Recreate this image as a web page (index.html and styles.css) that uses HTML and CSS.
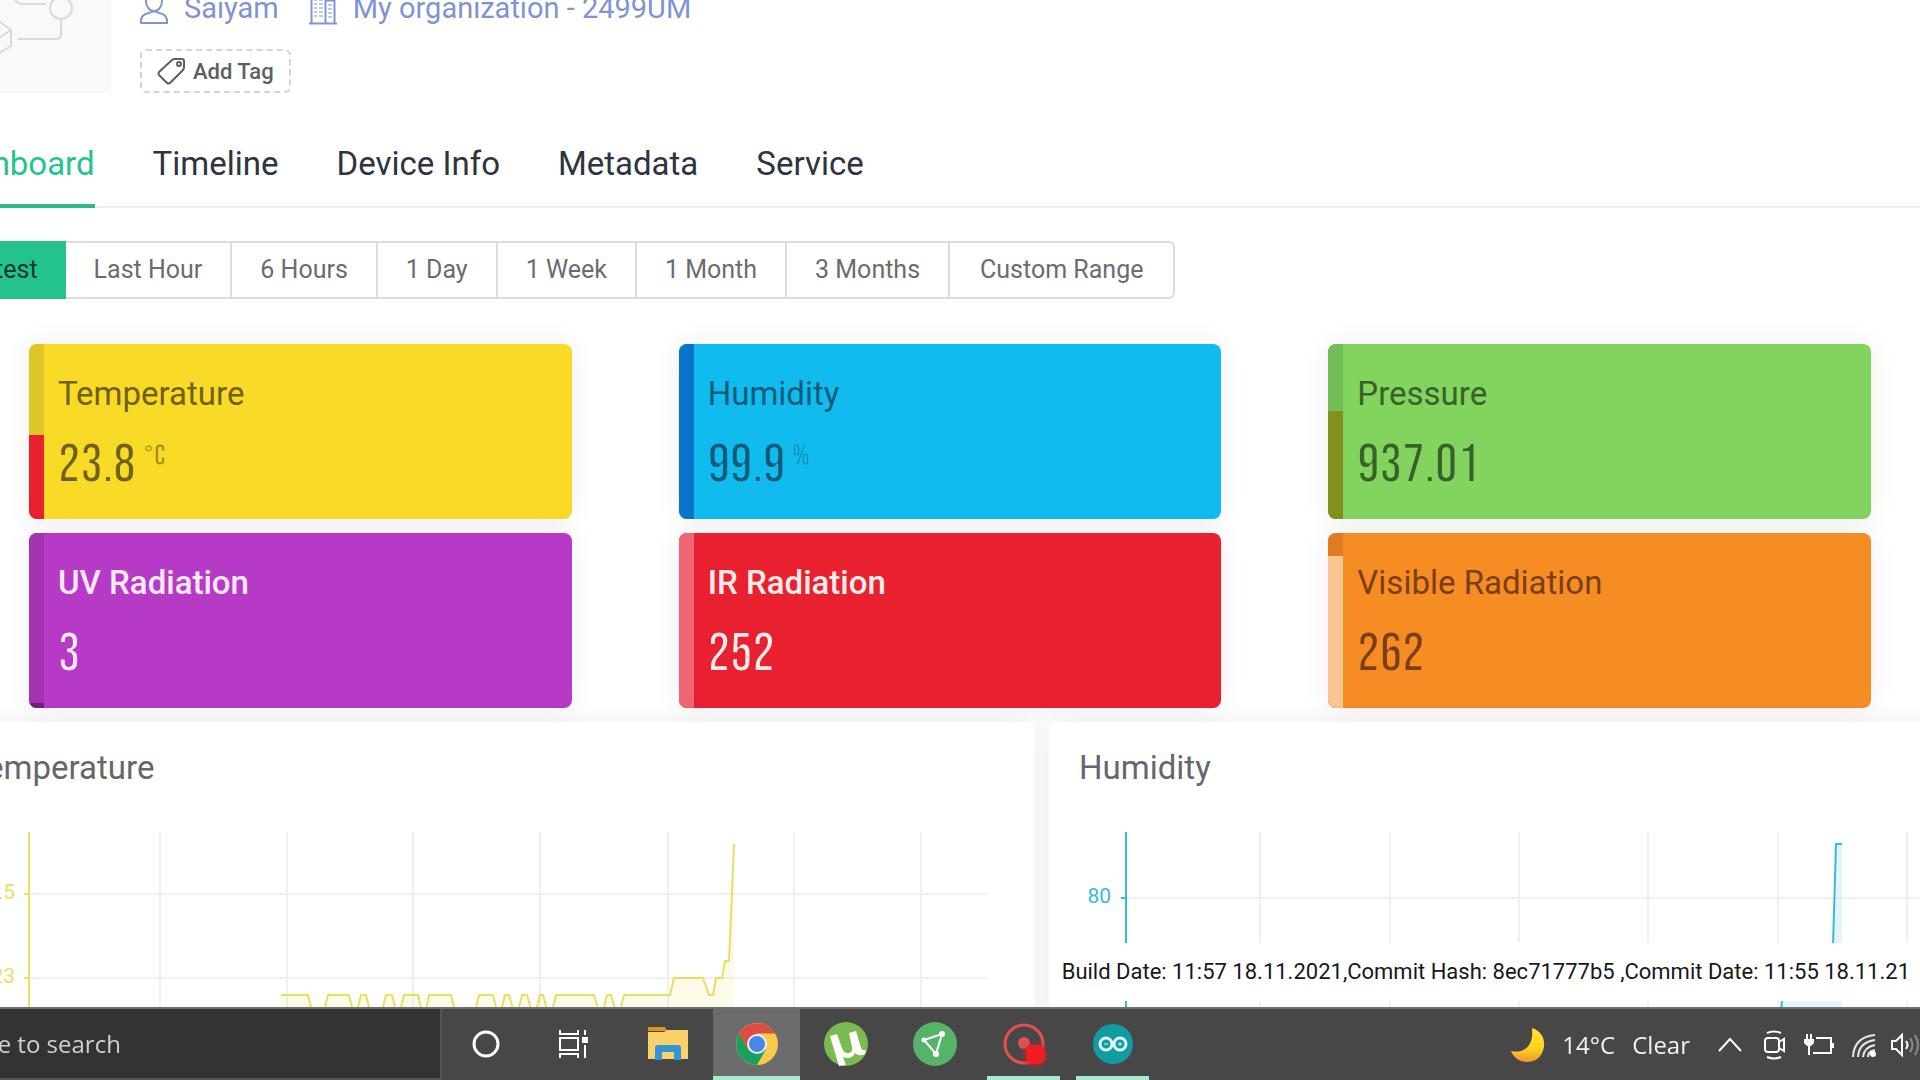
FILE: index.html
```html
<!DOCTYPE html>
<html lang="en">
<head>
<meta charset="utf-8">
<title>Device dashboard</title>
<link rel="stylesheet" href="styles.css">
</head>
<body>
<main class="page">
  <header class="device">
    <div class="device-thumb">
      <svg width="173" height="173" viewBox="0 0 173 173" fill="none" stroke="#dadada" stroke-width="2" aria-hidden="true">
        <circle cx="123" cy="88" r="11"/>
        <path d="M76 78q3 6 8 6h24M123 99v15q0 5-5 5H80M40 112l18-13 15 11v16l-15 9-18-12zM58 135v-15l15-10M58 120l-18-8"/>
      </svg>
    </div>
    <div class="device-info">
      <div class="device-meta">
        <a class="meta-link" href="#owner">
          <svg width="28" height="34" viewBox="0 0 28 34" fill="none" stroke="currentColor" stroke-width="2" aria-hidden="true"><ellipse cx="14" cy="10" rx="8" ry="10"/><path d="M1 32v-3q1-6 8-7 5-3 10 0 7 1 8 7v3z"/></svg>
          Saiyam
        </a>
        <a class="meta-link" href="#organization">
          <svg width="28" height="34" viewBox="0 0 28 34" fill="none" stroke="currentColor" stroke-width="1" aria-hidden="true"><path d="M0 32.500h28M2.500 32V4.500h14V32M16.500 9.500h9V32" stroke-width="2"/><path d="M5 9h3M10 9h4M5 13h3M10 13h4M5 17h3M10 17h4M5 21h3M10 21h4M5 25h3M10 25h4M19 14h4M19 18h4M19 22h4M19 26h4" stroke-width="1"/></svg>
          My organization - 2499UM
        </a>
      </div>
      <button class="add-tag" type="button">
        <svg width="28" height="28" viewBox="0 0 28 28" fill="none" stroke="currentColor" stroke-width="2" stroke-linejoin="round" aria-hidden="true"><path d="M15 3q1-1 3-1h7q2 0 2 2v6q0 2-1 3L13 26q-1 1-3 0l-8-8q-1-1 0-3z"/><circle cx="22" cy="7" r="2"/></svg>
        Add Tag
      </button>
    </div>
  </header>

  <nav class="tabs">
    <a class="tab tab-active" href="#dashboard">Dashboard</a>
    <a class="tab" href="#timeline">Timeline</a>
    <a class="tab" href="#info">Device Info</a>
    <a class="tab" href="#metadata">Metadata</a>
    <a class="tab" href="#service">Service</a>
  </nav>

  <div class="ranges">
    <button class="range range-active" type="button">Latest</button>
    <button class="range" type="button">Last Hour</button>
    <button class="range" type="button">6 Hours</button>
    <button class="range" type="button">1 Day</button>
    <button class="range" type="button">1 Week</button>
    <button class="range" type="button">1 Month</button>
    <button class="range" type="button">3 Months</button>
    <button class="range" type="button">Custom Range</button>
  </div>

  <section class="widgets">
    <article class="widget temperature">
      <div class="level"><div class="level-fill" style="height:48%"></div></div>
      <div class="widget-body"><h2 class="widget-title">Temperature</h2><p class="value">23.8<span class="unit">°C</span></p></div>
    </article>
    <article class="widget humidity">
      <div class="level"><div class="level-fill" style="height:100%"></div></div>
      <div class="widget-body"><h2 class="widget-title">Humidity</h2><p class="value">99.9<span class="unit">%</span></p></div>
    </article>
    <article class="widget pressure">
      <div class="level"><div class="level-fill" style="height:62%"></div></div>
      <div class="widget-body"><h2 class="widget-title">Pressure</h2><p class="value">937.01</p></div>
    </article>
    <article class="widget uv">
      <div class="level"><div class="level-fill" style="height:3%"></div></div>
      <div class="widget-body"><h2 class="widget-title">UV Radiation</h2><p class="value">3</p></div>
    </article>
    <article class="widget ir">
      <div class="level"><div class="level-fill" style="height:100%"></div></div>
      <div class="widget-body"><h2 class="widget-title">IR Radiation</h2><p class="value">252</p></div>
    </article>
    <article class="widget visible">
      <div class="level"><div class="level-fill" style="height:87%"></div></div>
      <div class="widget-body"><h2 class="widget-title">Visible Radiation</h2><p class="value">262</p></div>
    </article>
  </section>

  <section class="charts">
    <article class="chart">
      <h2 class="chart-title">Temperature</h2>
      <svg class="plot plot-temperature" width="1097" height="220" viewBox="0 0 1097 220">
        <path class="grid" d="M222 20V220M349 20V220M475 20V220M602 20V220M730 20V220M856 20V220M983 20V220M91 82H1049M91 166H1049"/>
        <path class="area" d="M343 220V183H370L376 207H384L390 183H411L417 207L423 183H428L434 207H442L448 183H454L460 207L466 183H480L486 207L491 183H513L519 207H535L541 183H555L561 207L567 183H571L578 207L584 183H589L596 207L602 183H605L612 207L618 183H656L663 207L669 183H673L680 207L686 183H732L736 166H765L771 183H775L778 166H784L787 149H791L796 32V220Z"/>
        <path class="line" d="M343 183H370L376 207H384L390 183H411L417 207L423 183H428L434 207H442L448 183H454L460 207L466 183H480L486 207L491 183H513L519 207H535L541 183H555L561 207L567 183H571L578 207L584 183H589L596 207L602 183H605L612 207L618 183H656L663 207L669 183H673L680 207L686 183H732L736 166H765L771 183H775L778 166H784L787 149H791L796 32"/>
        <path class="axis" d="M91 20V220M86 82H91M86 166H91"/>
        <text class="tick" x="77" y="87">23.5</text>
        <text class="tick" x="77" y="171">23</text>
      </svg>
    </article>
    <article class="chart">
      <h2 class="chart-title">Humidity</h2>
      <svg class="plot plot-humidity" width="1097" height="220" viewBox="0 0 1097 220">
        <path class="grid" d="M211 20V220M341 20V220M470 20V220M599 20V220M729 20V220M858 20V220M77 86H1049"/>
        <path class="area" d="M731 220V208L735 168H783L787 32H793V220Z"/>
        <path class="line" d="M731 208L735 168H783L787 32H793"/>
        <path class="axis" d="M77 20V220M72 86H77"/>
        <text class="tick" x="62" y="91">80</text>
      </svg>
    </article>
  </section>
</main>

<p class="build">Build Date: 11:57 18.11.2021,Commit Hash: 8ec71777b5 ,Commit Date: 11:55 18.11.21</p>

<footer class="taskbar">
  <label class="search"><input class="search-input" type="text" value="Type here to search" aria-label="Search"></label>
  <div class="shell">
    <button class="shell-button" type="button" aria-label="Cortana">
      <svg width="30" height="30" viewBox="0 0 30 30" fill="none" stroke="#fff" stroke-width="3"><circle cx="15" cy="15" r="12"/></svg>
    </button>
    <button class="shell-button" type="button" aria-label="Task view">
      <svg width="30" height="30" viewBox="0 0 30 30" fill="none" stroke="#fff" stroke-width="2"><path d="M1 1v4h18V1M1 29v-4h18v4M1 9h18v12H1zM26 1v5M26 16v13"/><path d="M23 8h6v6h-6z" fill="#fff" stroke="none"/></svg>
    </button>
  </div>
  <div class="apps">
    <button class="app" type="button" aria-label="File Explorer">
      <svg width="40" height="36" viewBox="0 0 40 36"><path d="M0 1h17l2 4H0z" fill="#dc9419"/><path d="M0 6h16l3-2h21v29H0z" fill="#fbd16b"/><path d="M7 34V22q0-3 3-3h20q3 0 3 3v12h-7v-8H14v8z" fill="#3594d4"/></svg>
    </button>
    <button class="app app-current" type="button" aria-label="Chrome">
      <svg width="42" height="42" viewBox="0 0 42 42"><circle cx="21" cy="21" r="21" fill="#fcca4b"/><path d="M3 10.500A21 21 0 0 1 39.200 10.500H21L12 26z" fill="#dc4c41"/><path d="M3 10.500A21 21 0 0 0 21 42L30 26.200 12 26.200z" fill="#18a05e"/><path d="M3 10.500L12 26.200 21 21V10.500z" fill="#dc4c41"/><circle cx="21" cy="21" r="10" fill="#e8eefb"/><circle cx="21" cy="21" r="8" fill="#4a86ea"/></svg>
    </button>
    <button class="app" type="button" aria-label="uTorrent">
      <svg width="44" height="44" viewBox="0 0 44 44"><circle cx="22" cy="22" r="22" fill="#7aba51"/><path d="M6 14l7-2 5 14q2 6 7 5 4-1 3-6L25 11l7-2 5 17q1 3 5 2l-1 4q-6 3-10-1-2 5-8 5-2 0-4-1l3 8-7 1z" fill="#fff"/></svg>
    </button>
    <button class="app" type="button" aria-label="VPN">
      <svg width="44" height="44" viewBox="0 0 44 44"><circle cx="22" cy="22" r="22" fill="#56b369"/><path d="M11 18L29 12 23 32z" fill="none" stroke="#fff" stroke-width="2"/><g fill="#fff"><circle cx="11" cy="18" r="2.500"/><circle cx="29" cy="12" r="3"/><circle cx="23" cy="32" r="3"/></g></svg>
    </button>
    <button class="app app-open" type="button" aria-label="Recorder">
      <svg width="48" height="48" viewBox="0 0 48 48" fill="none"><circle cx="24" cy="24" r="19" stroke="#e0524f" stroke-width="3"/><circle cx="24" cy="23" r="6" fill="#e0524f"/><circle cx="35" cy="35" r="13" fill="#d81f26" opacity=".35"/><rect x="26" y="25" width="19" height="19" rx="6" fill="#f11d25"/></svg>
    </button>
    <button class="app app-open" type="button" aria-label="Arduino">
      <svg width="40" height="40" viewBox="0 0 40 40" fill="none"><circle cx="20" cy="20" r="20" fill="#109da2"/><g stroke="#dff5f5" stroke-width="3"><circle cx="13" cy="20" r="6"/><circle cx="27" cy="20" r="6"/></g><path d="M11 20h4M25 20h4M27 18v4" stroke="#dff5f5"/></svg>
    </button>
  </div>
  <div class="tray">
    <div class="weather">
      <svg width="34" height="34" viewBox="0 0 34 34" aria-hidden="true"><defs><linearGradient id="moon" x1="0" y1="0" x2="0" y2="1"><stop offset="0" stop-color="#ffe53a"/><stop offset=".6" stop-color="#fcd31c"/><stop offset="1" stop-color="#f2952c"/></linearGradient></defs><path d="M21 0C30 3 34 10 33 19 31 29 25 34 16 34 9 34 3 30 0 23 14 26 23 17 21 0z" fill="url(#moon)"/></svg>
      <span>14°C</span><span>Clear</span>
    </div>
    <svg class="tray-more" width="24" height="16" viewBox="0 0 24 16" fill="none" stroke="#fff" stroke-width="2"><path d="M1 14L12 2l11 12"/></svg>
    <svg width="22" height="30" viewBox="0 0 22 30" fill="none" stroke="#fff" stroke-width="2"><path d="M3 3q7-3 14 0M3 27q7 3 14 0M15 12l5-3v12l-5-3"/><rect x="1" y="8" width="14" height="14" rx="3"/></svg>
    <svg width="30" height="22" viewBox="0 0 30 22" fill="none" stroke="#fff" stroke-width="2"><path d="M12 4h15v15H9M29 9v5M3 0v5M7 0v5M5 12v9"/><path d="M0 5h10v4L7 12H3L0 9z" fill="#fff" stroke="none"/></svg>
    <svg width="24" height="24" viewBox="0 0 24 24" fill="none" stroke="#e8e8e8" stroke-width="2"><path d="M1 24Q2 4 23 2M6 24Q7 9 23 7M11 24Q12 14 23 12M16 24Q16 18 23 17"/><circle cx="21" cy="21" r="3" fill="#fff" stroke="none"/></svg>
    <svg class="tray-volume" width="29" height="26" viewBox="0 0 29 26" fill="none" stroke="#fff" stroke-width="2"><path d="M1 9h4l6-6v20l-6-6H1z"/><path d="M15 9q3 4 0 8"/><path d="M19 6q5 7 0 14M24 3q6 10 0 20" stroke="#8b8b8b"/></svg>
  </div>
</footer>
</body>
</html>
```
FILE: styles.css
```css
* {
  box-sizing: border-box;
}

html,
body {
  margin: 0;
  height: 100%;
  overflow: hidden;
}

body {
  background: #fff;
  color: #2e3440;
  font-family: Roboto, "Liberation Sans", sans-serif;
  font-size: 33px;
}

button,
input {
  font: inherit;
  color: inherit;
}

h2,
p {
  margin: 0;
  font-weight: 400;
}

a {
  color: inherit;
  text-decoration: none;
}

svg {
  display: block;
  flex: none;
}

/* The page is wider than the window and scrolled right and down. */
.page {
  width: calc(100% + 288px);
  margin: -80px 0 0 -62px;
}

.device {
  display: flex;
  gap: 29px;
}

.device-thumb {
  background: #f9f9f9;
}

.device-info {
  display: flex;
  flex-direction: column;
  justify-content: flex-end;
  align-items: flex-start;
  gap: 24px;
}

.device-meta {
  display: flex;
  gap: 30px;
  color: #8093d2;
  font-size: 29px;
  line-height: 34px;
}

.meta-link {
  display: flex;
  gap: 16px;
}

.add-tag {
  display: flex;
  align-items: center;
  gap: 8px;
  height: 44px;
  padding: 0 15px;
  border: 2px dashed #d4d4d4;
  border-radius: 6px;
  background: none;
  color: #5c5e66;
  font-size: 22px;
  font-weight: 500;
}

.tabs {
  display: flex;
  gap: 58px;
  margin-top: 43px;
  margin-left: -3px;
  border-bottom: 2px solid #eeeeef;
}

.tab {
  margin-bottom: -2px;
  padding: 8px 0 20px;
  border-bottom: 4px solid transparent;
  line-height: 40px;
}

.tab-active {
  border-color: #2cbb88;
  color: #24c48e;
}

.ranges {
  display: inline-flex;
  margin-top: 33px;
  border: 2px solid #dcdcde;
  border-radius: 6px;
}

.range {
  height: 54px;
  padding: 0 28px 2px;
  border: 0;
  border-right: 2px solid #dcdcde;
  background: none;
  color: #6b6c70;
  font-size: 25px;
}

.range:last-child {
  padding: 0 30px 2px;
  border-right: 0;
}

.range-active {
  margin: -2px 0;
  height: 58px;
  border: 0;
  background: #24c38e;
  color: #14392d;
}

.widgets {
  display: grid;
  grid-template-columns: repeat(3, 1fr);
  gap: 14px 107px;
  margin-top: 45px;
  padding: 0 275px 0 91px;
}

.widget {
  display: flex;
  height: 175px;
  border-radius: 8px;
  background: var(--card);
  box-shadow: 0 0 28px rgba(0, 0, 0, 0.07);
}

.level {
  display: flex;
  flex-direction: column;
  justify-content: flex-end;
  width: 15px;
  border-radius: 8px 0 0 8px;
  overflow: hidden;
}

.widget-body {
  padding: 30px 14px;
}

.widget-title {
  font-size: 33px;
  line-height: 40px;
}

/* An outline in the card's own colour gives the digits a light weight. */
.value {
  display: flex;
  gap: 7px;
  margin-top: 24px;
  font-family: "Bebas Neue", "Roboto Condensed", "Liberation Sans Narrow", Roboto, sans-serif;
  font-size: 56px;
  font-weight: 300;
  line-height: 56px;
  -webkit-text-stroke: 2px var(--card);
}

.unit {
  font-size: 29px;
  line-height: 38px;
  opacity: 0.7;
  -webkit-text-stroke: 1px var(--card);
}

.temperature { --card: #f9da27; color: #70621a; }
.temperature .level { background: #dfc526; }
.temperature .level-fill { background: #e8212e; }
.humidity { --card: #12bbed; color: #0e5c79; }
.humidity .level-fill { background: #0a73cd; }
.pressure { --card: #82d45f; color: #38622a; }
.pressure .level { background: #73bc56; }
.pressure .level-fill { background: #82911e; }
.uv { --card: #b63ac6; color: #fbeafd; }
.uv .level { background: #a234b1; }
.uv .level-fill { background: #6b2276; }
.ir { --card: #e8202f; color: #fdecec; }
.ir .level-fill { background: #ef6672; }
.visible { --card: #f68c24; color: #7b3f17; }
.visible .level { background: #df7c20; }
.visible .level-fill { background: #f8c590; }

.uv .widget-title,
.ir .widget-title {
  font-weight: 500;
}

.charts {
  display: grid;
  grid-template-columns: 1fr 1fr;
  gap: 14px;
  margin-top: 14px;
}

.chart {
  padding-top: 26px;
  border-radius: 8px;
  background: #fff;
  box-shadow: 0 0 24px rgba(0, 0, 0, 0.07);
}

.chart-title {
  margin-bottom: 24px;
  padding: 0 30px;
  color: #66676b;
  font-size: 33px;
  line-height: 40px;
}

.grid {
  fill: none;
  stroke: #000;
  stroke-opacity: 0.06;
  stroke-width: 2px;
}

.line,
.axis {
  fill: none;
  stroke: currentColor;
  stroke-width: 2px;
}

.area {
  fill: currentColor;
  fill-opacity: 0.14;
}

.tick {
  fill: currentColor;
  font-size: 21px;
  text-anchor: end;
}

.plot-temperature { color: #eddc5e; }
.plot-humidity { color: #35bcd3; }

.build {
  position: fixed;
  right: 0;
  bottom: 79px;
  padding: 0 10px;
  background: #fff;
  color: #17171c;
  font-size: 22px;
  line-height: 58px;
}

.taskbar {
  position: fixed;
  inset: auto 0 0;
  display: flex;
  height: 73px;
  border-top: 2px solid #6f6f6f;
  background: #474747;
  color: #f2f2f2;
  font-family: "Open Sans", "Noto Sans", sans-serif;
  font-size: 24px;
}

.search {
  flex: none;
  width: 542px;
  margin-left: -100px;
  border: solid #555;
  border-width: 0 2px 2px 0;
}

.search-input {
  width: 100%;
  height: 100%;
  padding: 0;
  border: 0;
  background: #333;
  color: #d0d0d0;
}

.shell,
.apps {
  display: flex;
}

.shell {
  margin-right: 6px;
}

.apps {
  gap: 2px;
}

.shell-button,
.app {
  display: flex;
  align-items: center;
  justify-content: center;
  width: 88px;
  padding: 0 0 2px;
  border: 0;
  background: none;
}

.app {
  width: 87px;
}

.app-current {
  background: #6c6c6c;
  box-shadow: inset 0 -4px #a5edc9;
}

.app-open {
  background: linear-gradient(#a5edc9, #a5edc9) center bottom / 73px 4px no-repeat;
}

.tray {
  display: flex;
  align-items: center;
  gap: 18px;
  margin-left: auto;
}

.weather {
  display: flex;
  align-items: center;
  gap: 17px;
  margin-right: 10px;
}

.tray-more {
  margin-right: 4px;
}

.tray-volume {
  margin-left: -3px;
}
```
